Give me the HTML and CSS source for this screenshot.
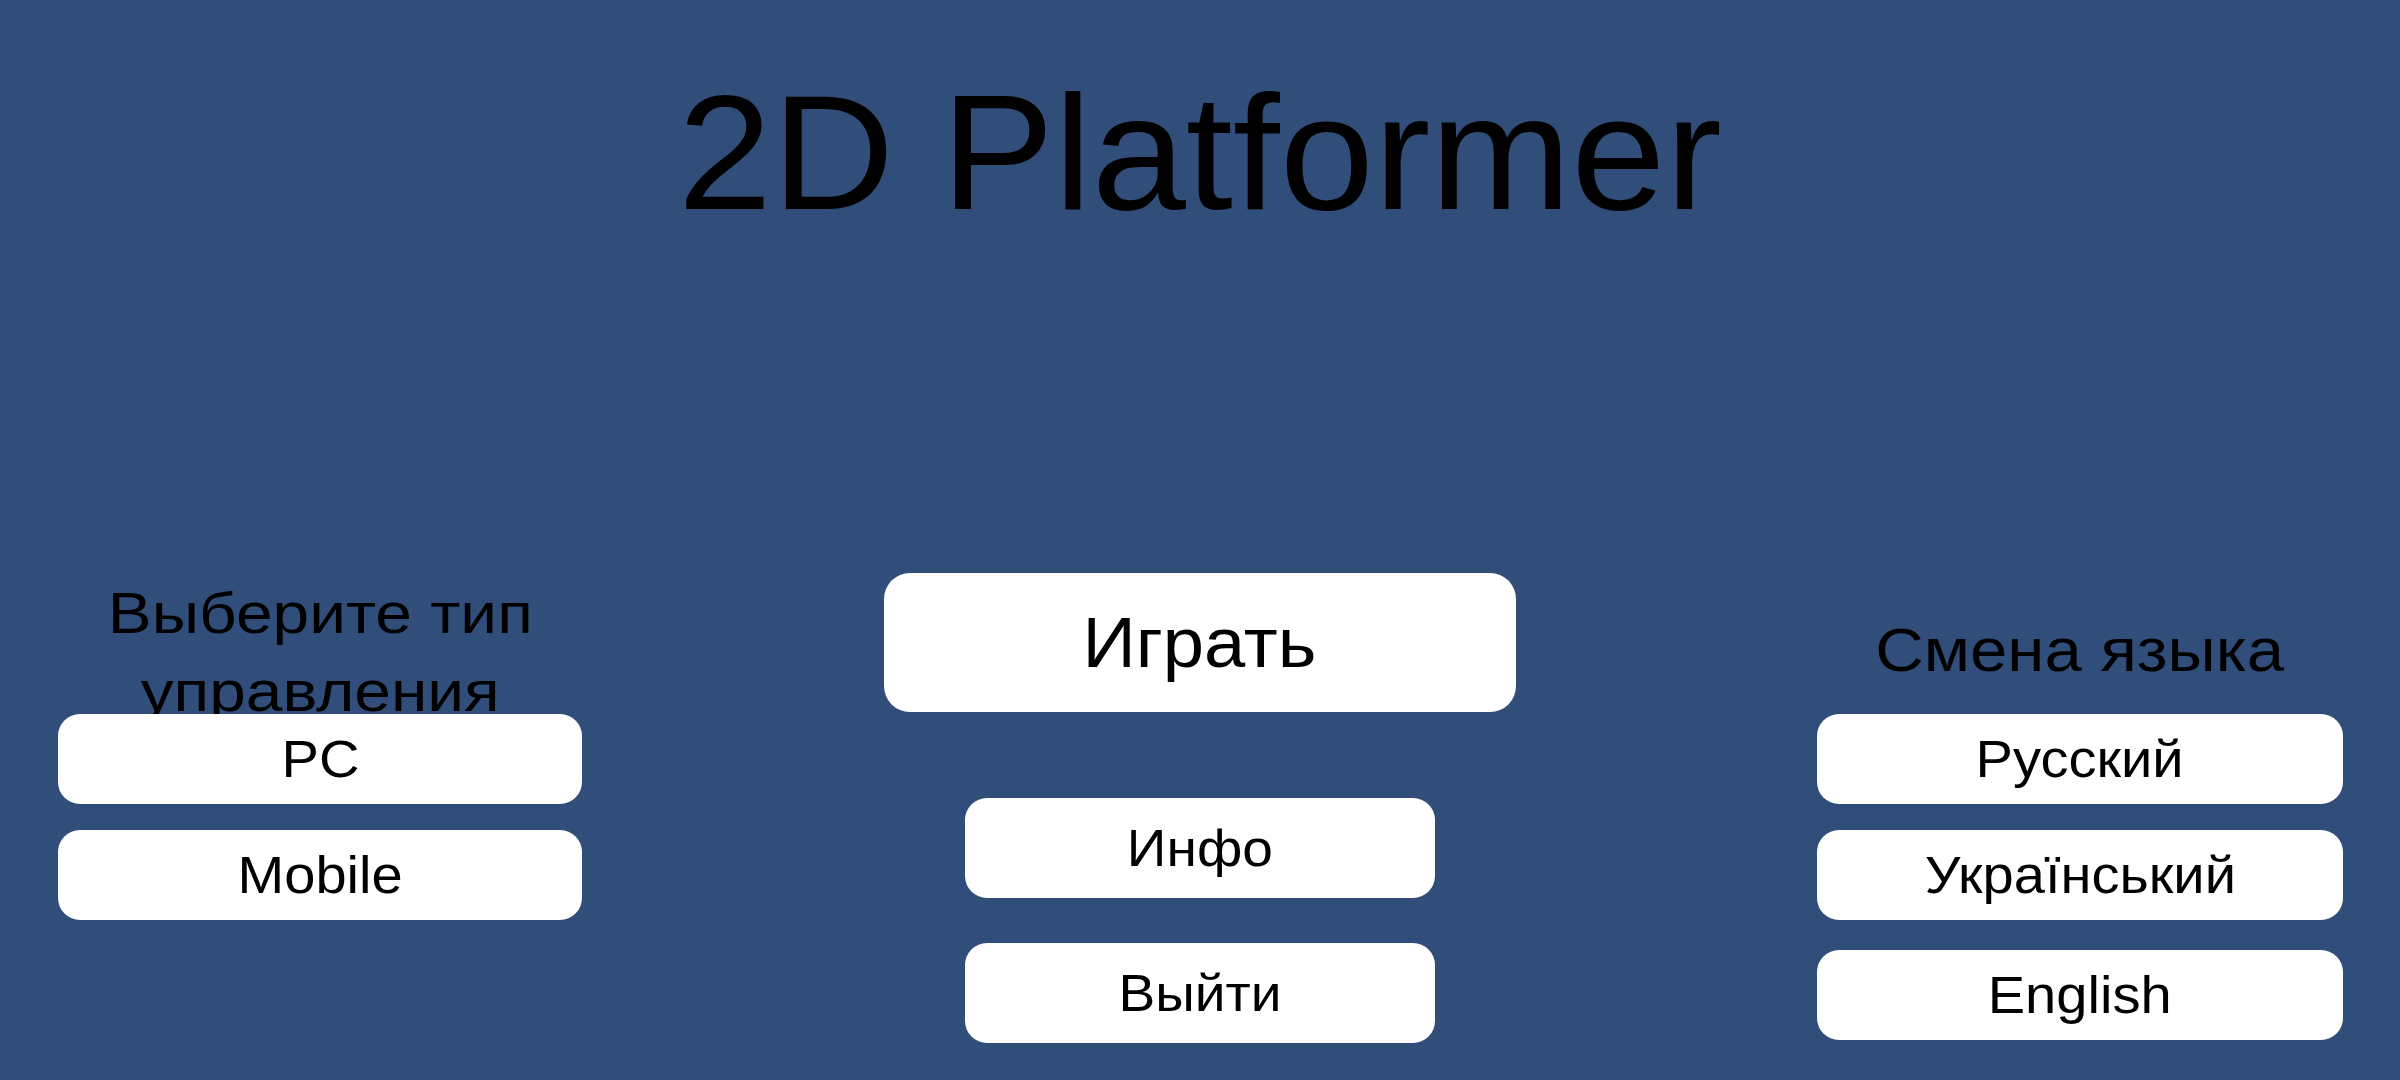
FILE: index.html
```html
<!DOCTYPE html>
<html lang="ru">
<head>
<meta charset="utf-8">
<title>2D Platformer</title>
<link rel="stylesheet" href="styles.css">
</head>
<body>
<main class="screen">
  <h1 class="title"><span class="stretch">2D Platformer</span></h1>
  <div class="menu">
    <section class="col col-left">
      <h2 class="heading heading-left"><span class="stretch">Выберите тип</span><br><span class="stretch">управления</span></h2>
      <div class="btn btn-side btn-first"><span class="stretch">PC</span></div>
      <div class="btn btn-side btn-next"><span class="stretch">Mobile</span></div>
    </section>
    <section class="col col-center">
      <div class="btn btn-play"><span class="stretch">Играть</span></div>
      <div class="btn btn-mid btn-info"><span class="stretch">Инфо</span></div>
      <div class="btn btn-mid btn-exit"><span class="stretch">Выйти</span></div>
    </section>
    <section class="col col-right">
      <h2 class="heading heading-right"><span class="stretch">Смена языка</span></h2>
      <div class="btn btn-side btn-first"><span class="stretch">Русский</span></div>
      <div class="btn btn-side btn-next"><span class="stretch">Український</span></div>
      <div class="btn btn-side btn-last"><span class="stretch">English</span></div>
    </section>
  </div>
</main>
</body>
</html>
```

FILE: styles.css
```css
html, body {
  margin: 0;
  padding: 0;
}
body {
  width: 2400px;
  height: 1080px;
  overflow: hidden;
  background: #314d79;
  font-family: "Liberation Sans", Arial, sans-serif;
  color: #000;
}
.screen {
  display: flex;
  flex-direction: column;
  height: 1080px;
}
.stretch {
  display: inline-block;
  transform: scaleX(1.06);
  white-space: nowrap;
}
.title {
  margin: 0;
  padding-top: 71px;
  font-size: 164px;
  line-height: 1;
  font-weight: normal;
  text-align: center;
}
.title .stretch {
  transform: scaleX(1.032);
}
.menu {
  margin-top: 338px;
  display: grid;
  grid-template-columns: 524px 1fr 526px;
  padding: 0 57px 0 58px;
}
.col {
  display: flex;
  flex-direction: column;
  align-items: stretch;
}
.col-center {
  align-items: center;
}
.heading {
  margin: 0;
  font-weight: normal;
  text-align: center;
}
.heading-left {
  margin-top: 1px;
  font-size: 58px;
  line-height: 78px;
}
.heading-left .stretch {
  transform: scaleX(1.135);
}
.heading-right {
  margin-top: 42px;
  font-size: 62px;
  line-height: 70px;
}
.heading-right .stretch {
  transform: scaleX(1.083);
}
.btn {
  display: flex;
  align-items: center;
  justify-content: center;
  background: #fff;
  border-radius: 22px;
  z-index: 1;
}
.btn-side {
  height: 90px;
  font-size: 51px;
}
.btn-side .stretch {
  transform: scaleX(1.1);
}
.col-left .btn-first {
  margin-top: -16px;
}
.col-right .btn-first {
  margin-top: 29px;
}
.btn-next {
  margin-top: 26px;
}
.btn-last {
  margin-top: 30px;
}
.btn-play {
  width: 632px;
  height: 139px;
  font-size: 70px;
  border-radius: 26px;
}
.btn-mid {
  width: 470px;
  height: 100px;
  font-size: 52px;
}
.btn-info {
  margin-top: 86px;
}
.btn-exit {
  margin-top: 45px;
}
```
